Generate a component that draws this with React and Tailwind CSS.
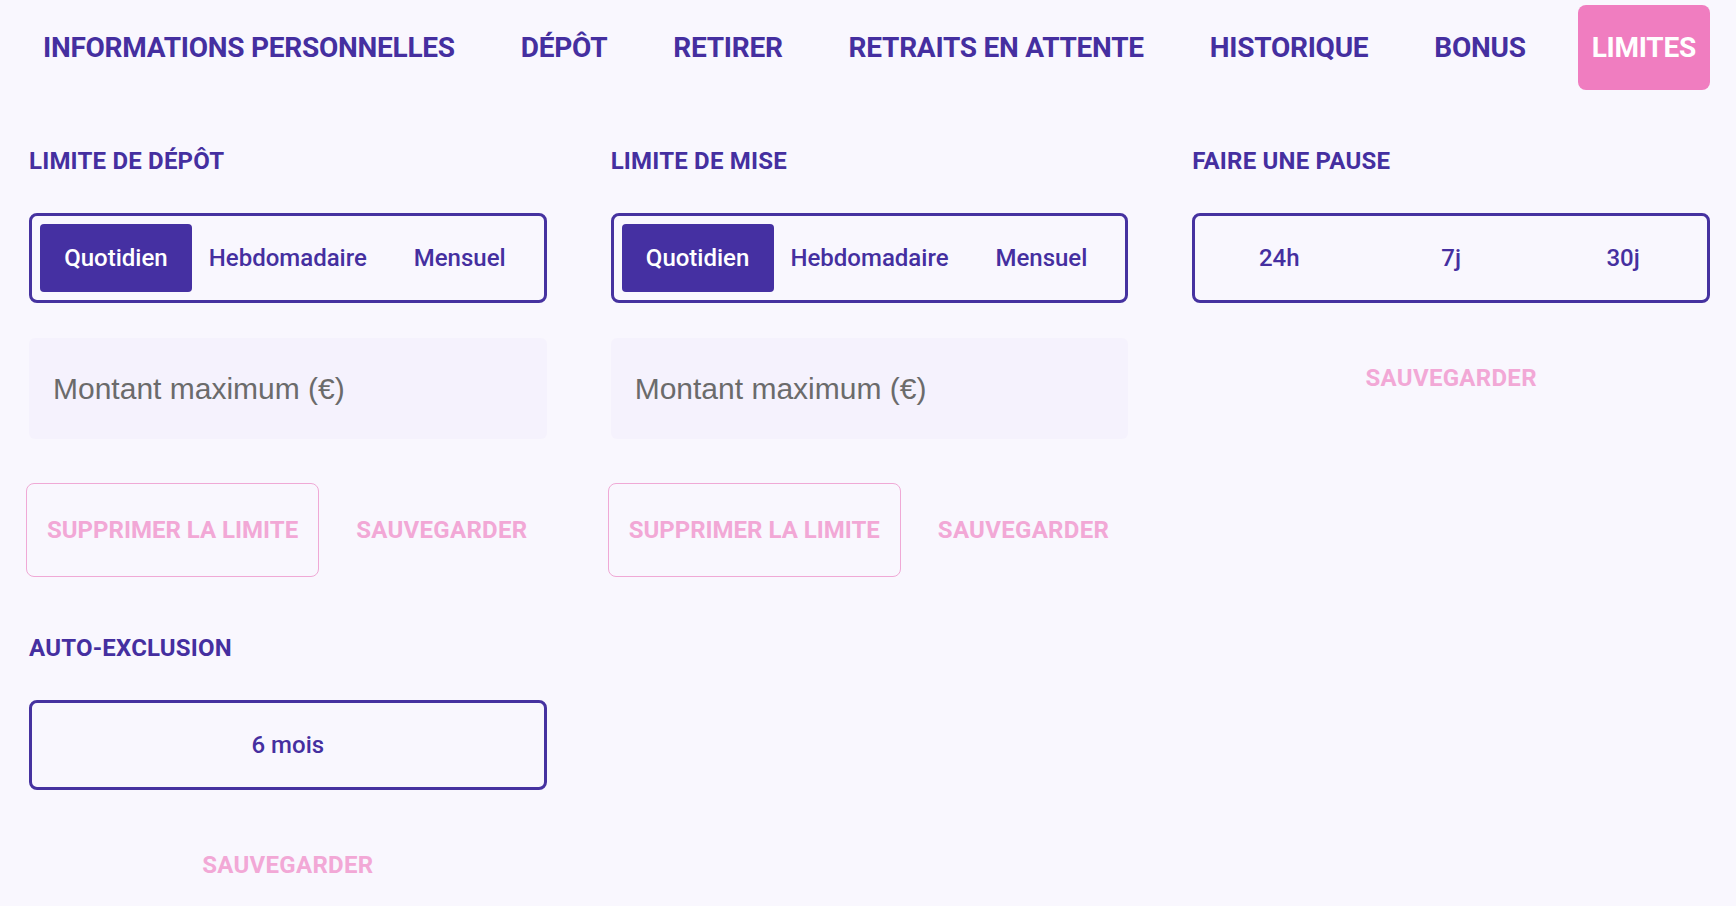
import React from "react";

const tabs = [
  "INFORMATIONS PERSONNELLES",
  "DÉPÔT",
  "RETIRER",
  "RETRAITS EN ATTENTE",
  "HISTORIQUE",
  "BONUS",
  "LIMITES",
];

function Heading({ children }) {
  return (
    <h2 className="text-[24px] leading-[28px] font-bold text-[#452fa0] tracking-[0.2px]">
      {children}
    </h2>
  );
}

function Segmented({ options, active }) {
  return (
    <div className="mt-[38px] h-[90px] rounded-[8px] border-[3px] border-[#4632a0] p-[8px] grid grid-cols-3 gap-x-[20px]">
      {options.map((o, i) => (
        <button
          key={o}
          className={
            i === active
              ? "rounded-[4px] bg-[#4530a2] text-white text-[24px] font-medium flex items-center justify-center"
              : "rounded-[4px] text-[#452fa0] text-[24px] font-medium flex items-center justify-center"
          }
        >
          {o}
        </button>
      ))}
    </div>
  );
}

function AmountInput() {
  return (
    <input
      type="text"
      placeholder="Montant maximum (€)"
      className="mt-[35px] h-[101px] w-full rounded-[6px] bg-[#f5f2fd] pl-[24px] text-[30px] text-[#6b6b6b] placeholder:text-[#6b6b6b] outline-none"
      style={{ fontFamily: '"Liberation Sans", Arial, sans-serif' }}
    />
  );
}

function LimitButtons() {
  return (
    <div className="mt-[44px] -ml-[3px] flex gap-[16px] whitespace-nowrap">
      <button className="h-[94px] shrink-0 whitespace-nowrap rounded-[8px] border border-[#f0a9d6] px-[20px] text-[24px] font-bold text-[#f2a8d6]">
        SUPPRIMER LA LIMITE
      </button>
      <button className="h-[94px] shrink-0 whitespace-nowrap rounded-[8px] border border-transparent px-[20px] text-[24px] font-bold text-[#f2a8d6] tracking-[0.3px]">
        SAUVEGARDER
      </button>
    </div>
  );
}

function SaveCentered() {
  return (
    <div className="mt-[28px] flex justify-center">
      <button className="h-[94px] whitespace-nowrap px-[20px] text-[24px] font-bold text-[#f2a8d6] tracking-[0.3px]">
        SAUVEGARDER
      </button>
    </div>
  );
}

export default function App() {
  return (
    <div
      className="min-h-screen bg-[#f9f7fe] pl-[29px] pr-[26px] pt-[5px]"
      style={{ fontFamily: 'Roboto, "Noto Sans", sans-serif' }}
    >
      <nav className="flex items-center justify-between">
        {tabs.map((t) => (
          <button
            key={t}
            className={
              t === "LIMITES"
                ? "h-[85px] whitespace-nowrap rounded-[8px] bg-[#f07dc0] px-[14px] text-[28px] font-bold text-white tracking-[-0.25px]"
                : "h-[85px] whitespace-nowrap rounded-[8px] px-[14px] text-[28px] font-bold text-[#452fa0] tracking-[-0.25px]"
            }
          >
            {t}
          </button>
        ))}
      </nav>

      <div className="mt-[57px] grid grid-cols-3 gap-x-[64px] gap-y-[57px]">
        <section>
          <Heading>LIMITE DE DÉPÔT</Heading>
          <Segmented options={["Quotidien", "Hebdomadaire", "Mensuel"]} active={0} />
          <AmountInput />
          <LimitButtons />
        </section>
        <section>
          <Heading>LIMITE DE MISE</Heading>
          <Segmented options={["Quotidien", "Hebdomadaire", "Mensuel"]} active={0} />
          <AmountInput />
          <LimitButtons />
        </section>
        <section>
          <Heading>FAIRE UNE PAUSE</Heading>
          <Segmented options={["24h", "7j", "30j"]} active={-1} />
          <SaveCentered />
        </section>
        <section>
          <Heading>AUTO-EXCLUSION</Heading>
          <div className="mt-[38px] h-[90px] rounded-[8px] border-[3px] border-[#4632a0] flex items-center justify-center text-[24px] font-medium text-[#452fa0]">
            6 mois
          </div>
          <SaveCentered />
        </section>
      </div>
    </div>
  );
}
